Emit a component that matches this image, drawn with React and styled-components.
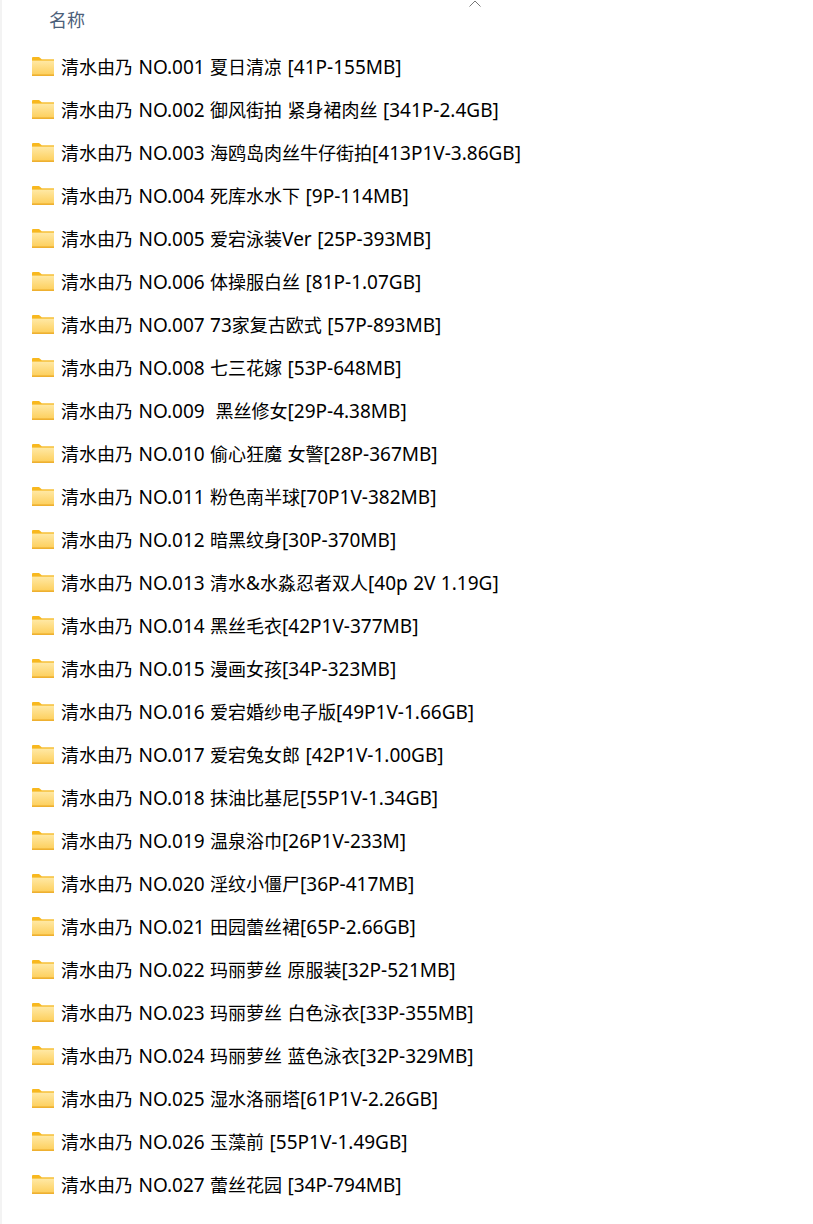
import styled, { createGlobalStyle } from "styled-components";

const folders = [
  "清水由乃 NO.001 夏日清凉 [41P-155MB]",
  "清水由乃 NO.002 御风街拍 紧身裙肉丝 [341P-2.4GB]",
  "清水由乃 NO.003 海鸥岛肉丝牛仔街拍[413P1V-3.86GB]",
  "清水由乃 NO.004 死库水水下 [9P-114MB]",
  "清水由乃 NO.005 爱宕泳装Ver [25P-393MB]",
  "清水由乃 NO.006 体操服白丝 [81P-1.07GB]",
  "清水由乃 NO.007 73家复古欧式 [57P-893MB]",
  "清水由乃 NO.008 七三花嫁 [53P-648MB]",
  "清水由乃 NO.009  黑丝修女[29P-4.38MB]",
  "清水由乃 NO.010 偷心狂魔 女警[28P-367MB]",
  "清水由乃 NO.011 粉色南半球[70P1V-382MB]",
  "清水由乃 NO.012 暗黑纹身[30P-370MB]",
  "清水由乃 NO.013 清水&水淼忍者双人[40p 2V 1.19G]",
  "清水由乃 NO.014 黑丝毛衣[42P1V-377MB]",
  "清水由乃 NO.015 漫画女孩[34P-323MB]",
  "清水由乃 NO.016 爱宕婚纱电子版[49P1V-1.66GB]",
  "清水由乃 NO.017 爱宕兔女郎 [42P1V-1.00GB]",
  "清水由乃 NO.018 抹油比基尼[55P1V-1.34GB]",
  "清水由乃 NO.019 温泉浴巾[26P1V-233M]",
  "清水由乃 NO.020 淫纹小僵尸[36P-417MB]",
  "清水由乃 NO.021 田园蕾丝裙[65P-2.66GB]",
  "清水由乃 NO.022 玛丽萝丝 原服装[32P-521MB]",
  "清水由乃 NO.023 玛丽萝丝 白色泳衣[33P-355MB]",
  "清水由乃 NO.024 玛丽萝丝 蓝色泳衣[32P-329MB]",
  "清水由乃 NO.025 湿水洛丽塔[61P1V-2.26GB]",
  "清水由乃 NO.026 玉藻前 [55P1V-1.49GB]",
  "清水由乃 NO.027 蕾丝花园 [34P-794MB]",
];

const GlobalStyle = createGlobalStyle`
  html, body {
    margin: 0;
    background: #fff;
  }
  body {
    font-family: "Noto Sans", "Noto Sans CJK SC", sans-serif;
  }
`;

const Page = styled.div`
  width: 813px;
  height: 1224px;
  box-sizing: border-box;
  overflow: hidden;
  border-left: 2px solid #f3f3f3;
  background: #fff;
`;

const Header = styled.div`
  position: relative;
  height: 45px;
  box-sizing: border-box;
  padding: 8px 0 0 47px;
  color: #4c607a;
  font-size: 18px;
  line-height: 24px;
`;

const SortArrow = styled.svg`
  position: absolute;
  top: 0;
  left: 467px;
  width: 12px;
  height: 7px;
`;

const List = styled.div`
  display: flex;
  flex-direction: column;
`;

const Row = styled.div`
  display: flex;
  align-items: center;
  gap: 6px;
  height: 43px;
  padding-left: 29px;
`;

const Name = styled.span`
  color: #000;
  font-size: 18px;
  line-height: 24px;
  white-space: pre;
`;

// the latin runs sit a touch larger than the CJK ones in the reference
const Latin = styled.span`
  font-size: 19px;
  word-spacing: 0.5px;
`;

const Folder = styled.svg`
  flex: none;
  width: 24px;
  height: 19px;
`;

const FolderIcon = () => (
  <Folder viewBox="0 0 24 19">
    <defs>
      <linearGradient id="folderFill" x1="0" y1="0" x2="0" y2="1">
        <stop offset="0" stopColor="#ffe9a6" />
        <stop offset="1" stopColor="#fdcf5c" />
      </linearGradient>
    </defs>
    <path d="M2 0h6l3 2.500h12V5H1V1a1 1 0 0 1 1-1z" fill="#f8b81f" />
    <path d="M1 3.500h22V18H1z" fill="url(#folderFill)" />
    <path d="M1 3h9l1-.5h12v1H1z" fill="#f6c445" />
    <path d="M1 17.400h22V19H1z" fill="#eeb030" />
  </Folder>
);

const splitRuns = (text) => text.split(/([\x20-\x7e]+)/).filter(Boolean);

export default function App() {
  return (
    <>
      <GlobalStyle />
      <Page>
        <Header>
          名称
          <SortArrow viewBox="0 0 12 7">
            <path d="M.5 6.500 6 1l5.500 5.500" fill="none" stroke="#777" strokeWidth="1" />
          </SortArrow>
        </Header>
        <List>
          {folders.map((name) => (
            <Row key={name}>
              <FolderIcon />
              <Name>
                {splitRuns(name).map((run, i) =>
                  /^[\x20-\x7e]/.test(run) ? <Latin key={i}>{run}</Latin> : run
                )}
              </Name>
            </Row>
          ))}
        </List>
      </Page>
    </>
  );
}
